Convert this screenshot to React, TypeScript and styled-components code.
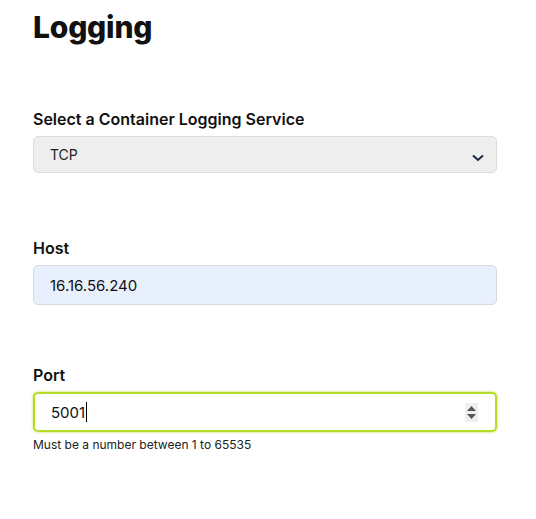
import React from "react";
import styled, { createGlobalStyle } from "styled-components";

const Global = createGlobalStyle`
  html, body { margin: 0; padding: 0; background: #ffffff; }
  body { font-family: Inter, Lato, sans-serif; color: #111111; }
  * { box-sizing: border-box; }
`;

const Page = styled.div`
  width: 536px;
  padding: 8px 39px 0 33px;
`;

const Title = styled.h1`
  margin: 0;
  font-size: 30px;
  line-height: 38px;
  font-weight: 800;
  letter-spacing: -0.2px;
`;

const Form = styled.div`
  display: flex;
  flex-direction: column;
  margin-top: 63px;
`;

const Field = styled.div<{ $space?: number }>`
  display: flex;
  flex-direction: column;
  margin-top: ${(p) => p.$space ?? 0}px;
`;

const Label = styled.label`
  font-size: 16px;
  line-height: 20px;
  font-weight: 600;
  margin-bottom: 7px;
`;

const SelectBox = styled.div`
  height: 37px;
  display: flex;
  align-items: center;
  justify-content: space-between;
  padding: 0 11px 0 16px;
  background: #eeeeee;
  border: 1px solid #dddddd;
  border-radius: 5px;
  font-size: 14px;
  color: #222222;
`;

const Chevron = styled.svg`
  width: 14px;
  height: 14px;
  margin-top: 6px;
`;

const TextInput = styled.input`
  height: 40px;
  padding: 0 16px;
  background: #e8f0fe;
  border: 1px solid #d5d9e0;
  border-radius: 5px;
  font-family: inherit;
  font-size: 15px;
  color: #111111;
  outline: none;
`;

const NumberBox = styled.div`
  height: 40px;
  display: flex;
  align-items: center;
  justify-content: space-between;
  padding: 0 17px 0 16px;
  background: #ffffff;
  border: 2px solid #b5dc2c;
  box-shadow: 0 0 2px 1px rgba(181, 220, 44, 0.45);
  border-radius: 5px;
  font-size: 15px;
`;

const Value = styled.span`
  display: flex;
  align-items: center;
`;

const Caret = styled.span`
  display: inline-block;
  width: 1px;
  height: 20px;
  background: #000000;
  margin-left: 1px;
`;

const Spinner = styled.div`
  width: 13px;
  height: 19px;
  background: #efefef;
  display: flex;
  flex-direction: column;
  align-items: center;
  justify-content: center;
  gap: 3px;
`;

const Help = styled.div`
  margin-top: 6px;
  font-size: 12px;
  line-height: 14px;
  color: #222222;
`;

export default function App() {
  return (
    <>
      <Global />
      <Page>
        <Title>Logging</Title>
        <Form>
          <Field>
            <Label>Select a Container Logging Service</Label>
            <SelectBox>
              <span>TCP</span>
              <Chevron viewBox="0 0 14 14">
                <path d="M2 4.5 L7 9 L12 4.5" fill="none" stroke="#1b2a3a" strokeWidth="2" />
              </Chevron>
            </SelectBox>
          </Field>
          <Field $space={65}>
            <Label>Host</Label>
            <TextInput readOnly value="16.16.56.240" />
          </Field>
          <Field $space={60}>
            <Label>Port</Label>
            <NumberBox>
              <Value>
                5001
                <Caret />
              </Value>
              <Spinner>
                <svg width="9" height="5" viewBox="0 0 9 5">
                  <path d="M0 5 L4.5 0 L9 5 Z" fill="#555555" />
                </svg>
                <svg width="9" height="5" viewBox="0 0 9 5">
                  <path d="M0 0 L4.5 5 L9 0 Z" fill="#555555" />
                </svg>
              </Spinner>
            </NumberBox>
            <Help>Must be a number between 1 to 65535</Help>
          </Field>
        </Form>
      </Page>
    </>
  );
}
